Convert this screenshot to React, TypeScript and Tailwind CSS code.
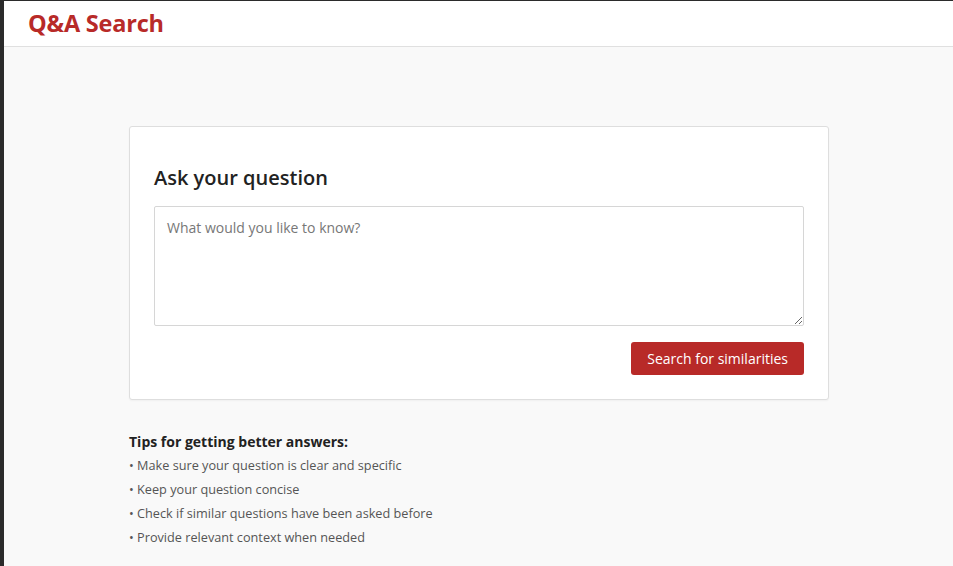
export default function App() {
  const tips = [
    "Make sure your question is clear and specific",
    "Keep your question concise",
    "Check if similar questions have been asked before",
    "Provide relevant context when needed",
  ];

  return (
    <div
      className="min-h-[566px] bg-[#f9f9f9] border-t border-l-4 border-[#2b2b2b] flex flex-col"
      style={{ fontFamily: '"Open Sans", "Noto Sans", sans-serif' }}
    >
      <header className="h-[46px] bg-white border-b border-[#e0e0e0] flex items-center px-6">
        <h1 className="text-[23.5px] font-bold text-[#b82a28] tracking-[-0.2px]">Q&amp;A Search</h1>
      </header>

      <main className="flex-1 flex flex-col items-start pl-[125px] pt-[79px]">
        <div className="w-[700px] bg-white border border-[#dedede] rounded-[3px] shadow-[0_1px_2px_rgba(0,0,0,0.04)] px-6 pt-[37px] pb-6">
          <h2 className="text-[20px] leading-7 font-semibold text-[#222]">Ask your question</h2>
          <textarea
            className="mt-[14px] block w-full h-[120px] border border-[#d6d6d6] rounded-[2px] px-3 py-[10px] text-[14px] text-[#333] placeholder:text-[#777] outline-none resize-y"
            placeholder="What would you like to know?"
          />
          <div className="mt-4 flex justify-end">
            <button className="h-[33px] px-4 bg-[#b82a28] text-white text-[14px] font-medium rounded-[3px]">
              Search for similarities
            </button>
          </div>
        </div>

        <div className="mt-[32px]">
          <h3 className="text-[14px] font-bold text-[#222] leading-5">Tips for getting better answers:</h3>
          <ul className="mt-[1px] text-[12.7px] text-[#555]">
            {tips.map((t) => (
              <li key={t} className="leading-6">• {t}</li>
            ))}
          </ul>
        </div>
      </main>
    </div>
  );
}
